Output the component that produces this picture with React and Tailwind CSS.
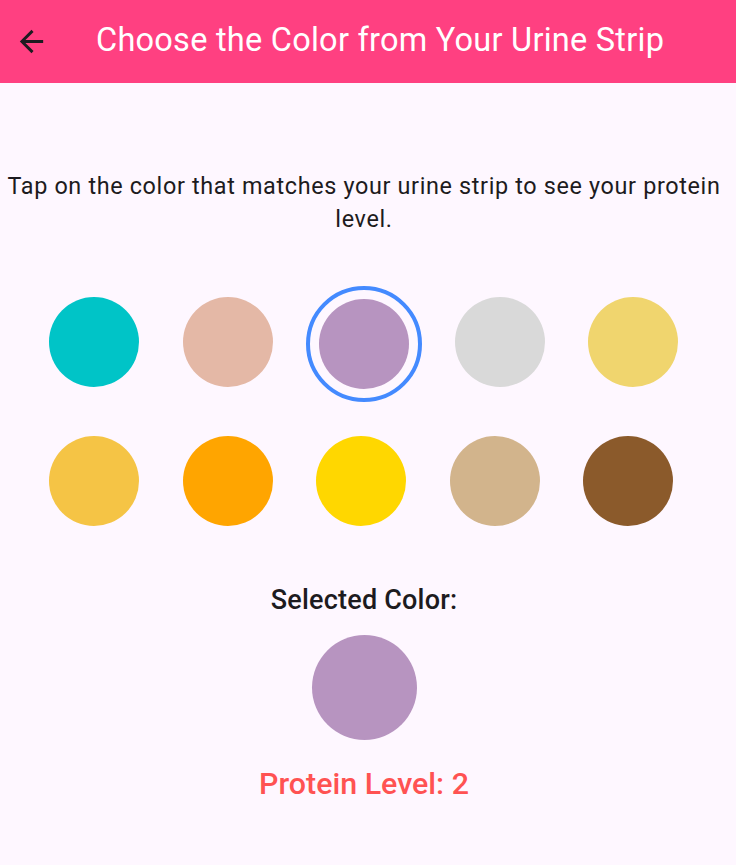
import React from "react";

const row1 = ["#00C4C7", "#E4B8A6", "#B794C0", "#D9D9D9", "#F0D56E"];
const row2 = ["#F5C445", "#FFA500", "#FFD700", "#D2B48C", "#8B5A2B"];
const colors = [...row1, ...row2];
const selectedIndex = 2;

export default function App() {
  return (
    <div
      className="w-[736px] h-[865px] bg-[#FEF7FF] flex flex-col"
      style={{ fontFamily: "Roboto, 'Liberation Sans', sans-serif" }}
    >
      <header className="h-[83px] bg-[#FF4081] flex items-center shrink-0">
        <div className="w-[62px] h-full flex items-center justify-center">
          <svg width="35" height="35" viewBox="0 0 24 24" fill="#1D1B20">
            <path d="M20 11H7.83l5.59-5.59L12 4l-8 8 8 8 1.41-1.41L7.83 13H20v-2z" />
          </svg>
        </div>
        <h1 className="ml-[34px] pb-[3px] text-white text-[32.5px] leading-[38px] tracking-[0.25px] font-normal">
          Choose the Color from Your Urine Strip
        </h1>
      </header>

      <main className="w-[728px] flex flex-col items-center">
        <p className="mt-[87px] text-center text-[23.4px] leading-[33.4px] tracking-[0.65px] text-[#1D1B20]">
          Tap on the color that matches your urine strip to see your protein level.
        </p>

        <div className="mt-[47px] w-full pl-[36px] pr-[28px] flex flex-wrap items-start gap-x-[17.5px] gap-y-[18px]">
          {colors.map((c, i) =>
            i === selectedIndex ? (
              <div
                key={i}
                className="m-[2.5px] w-[116px] h-[116px] rounded-full border-[4px] border-[#448AFF] p-[9px]"
              >
                <div className="w-[90px] h-[90px] rounded-full" style={{ backgroundColor: c }} />
              </div>
            ) : (
              <div key={i} className="m-[13px] w-[90px] h-[90px] rounded-full" style={{ backgroundColor: c }} />
            )
          )}
        </div>

        <h2 className="mt-[43px] text-[27px] leading-[37px] tracking-[0.2px] font-medium text-[#1D1B20]">
          Selected Color:
        </h2>
        <div className="mt-[16px] w-[105px] h-[105px] rounded-full bg-[#B794C0]" />
        <p className="mt-[22px] text-[30.4px] leading-[44.6px] font-medium text-[#FF5252]">
          Protein Level: 2
        </p>
      </main>
    </div>
  );
}
